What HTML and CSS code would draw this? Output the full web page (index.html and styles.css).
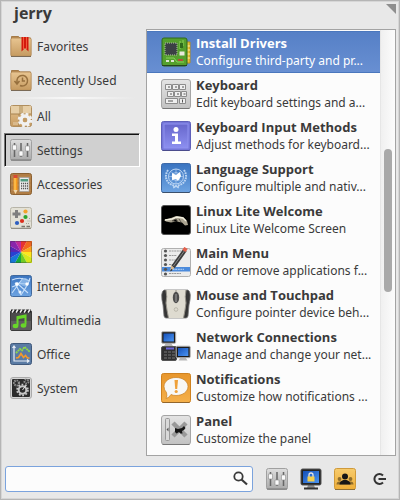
FILE: index.html
```html
<!DOCTYPE html>
<html lang="en">
<head>
<meta charset="utf-8">
<meta name="viewport" content="width=device-width, initial-scale=1">
<title>Applications</title>
<link rel="stylesheet" href="styles.css">
</head>
<body>
<svg class="defs" aria-hidden="true">
  <defs>
    <linearGradient id="tan" x2="0" y2="1"><stop stop-color="#e8c591"/><stop offset="1" stop-color="#c59a60"/></linearGradient>
    <linearGradient id="silver" x2="0" y2="1"><stop stop-color="#dedede"/><stop offset="1" stop-color="#a9a9a9"/></linearGradient>
    <linearGradient id="pale" x2="0" y2="1"><stop stop-color="#e4e4e4"/><stop offset="1" stop-color="#c2c2c2"/></linearGradient>
    <linearGradient id="blue" x2="0" y2="1"><stop stop-color="#3a74c0"/><stop offset="1" stop-color="#6ea4e2"/></linearGradient>
    <linearGradient id="violet" x2="0" y2="1"><stop stop-color="#6767cc"/><stop offset="1" stop-color="#8c8ff0"/></linearGradient>
    <linearGradient id="orange" x2="0" y2="1"><stop stop-color="#e7962c"/><stop offset="1" stop-color="#f5b04a"/></linearGradient>
    <linearGradient id="amber" x2="0" y2="1"><stop stop-color="#f7cb6c"/><stop offset="1" stop-color="#eeae38"/></linearGradient>
    <linearGradient id="screen" x2="1" y2="1"><stop stop-color="#1550b8"/><stop offset="1" stop-color="#4b95f2"/></linearGradient>
    <symbol id="sliders" viewBox="0 0 22 22">
      <rect x=".5" y=".5" width="21" height="21" rx="2" fill="url(#silver)" stroke="#a0a0a0"/>
      <path d="M1 21h20" stroke="#777"/>
      <path d="M4.500 4v14M11 4v14M17.500 4v14" stroke="#666" stroke-width="1.500"/>
      <path d="M2.500 6h4v5h-4zM9 12h4v5H9zM15.500 7h4v5h-4z" fill="#fafafa" stroke="#8d8d8d" stroke-width=".6"/>
    </symbol>
  </defs>
</svg>
<main class="menu">
  <header class="head">
    <h1 class="user">jerry</h1>
    <svg class="grip" viewBox="0 0 10 10" aria-hidden="true"><path d="M0 0h10v10z" fill="#8e8e8e"/></svg>
  </header>

  <div class="body">
    <nav class="cats" aria-label="Categories">
      <button class="cat">
        <svg class="ico" viewBox="0 0 22 22"><path d="M1.500 3V1.500h7L10 3h10.500v18h-19z" fill="#b98d55" stroke="#a57b48"/><rect x=".8" y="3" width="20.400" height="18.300" rx="1.500" fill="url(#tan)" stroke="#b08550" stroke-width=".8"/><path d="M1 21.500h20" stroke="#7a6a56"/><path d="M11.500 2h7v14.500L15 13l-3.500 3.500z" fill="#d3190c"/><path d="M13.500 2v12M16.500 2v12" stroke="#f15a3a"/></svg>
        <span>Favorites</span></button>
      <button class="cat">
        <svg class="ico" viewBox="0 0 22 22"><path d="M1.500 3V1.500h7L10 3h10.500v18h-19z" fill="#b98d55" stroke="#a57b48"/><rect x=".8" y="3" width="20.400" height="18.300" rx="1.500" fill="url(#tan)" stroke="#b08550" stroke-width=".8"/><path d="M1 21.500h20" stroke="#7a6a56"/><path d="M7 14.500V11a5.300 5.300 0 1 1 3 5.500M4.500 12l2.500 3 2.500-3M12.500 8.500V12H15" fill="none" stroke="#97703e" stroke-width="1.500"/></svg>
        <span>Recently Used</span></button>
      <hr class="rule">
      <button class="cat">
        <svg class="ico" viewBox="0 0 22 22"><rect x=".5" y=".5" width="21" height="21" rx="2" fill="url(#tan)" stroke="#b08e5e"/><path d="M1 1h20v8H1z" fill="#e6cea6"/><path d="M9 1h4v8H9z" fill="#c9ad7e"/><path d="M1 9h20M9 9v12" stroke="#a88350"/><path d="M3 17h5v3H3z" fill="#d9b98b"/><circle cx="15" cy="15" r="4" fill="none" stroke="#f1f1f1" stroke-width="3.400"/><circle cx="15" cy="15" r="6" fill="none" stroke="#f1f1f1" stroke-width="2.600" stroke-dasharray="2.700 2"/><circle cx="15" cy="15" r="2.200" fill="#c29b65"/></svg>
        <span>All</span></button>
      <button class="cat cat-on" aria-current="true">
        <svg class="ico"><use href="#sliders"/></svg>
        <span>Settings</span></button>
      <button class="cat">
        <svg class="ico" viewBox="0 0 22 22"><rect x=".5" y=".5" width="21" height="21" rx="2" fill="#b07d45" stroke="#8b6031"/><path d="M1 4h20M1 8h20M1 12h20M1 17h20" stroke="#c2925a" stroke-width=".7"/><path d="M3.500 5h4v12l-2 4-2-4z" fill="#f79a1e"/><path d="M5 5v12" stroke="#ffd36a"/><path d="M3.500 2h4v3h-4z" fill="#d84a30"/><path d="M3.500 17h4l-2 4z" fill="#eed7b0"/><rect x="9.500" y="4.500" width="9.500" height="14" fill="#ececec" stroke="#999" stroke-width=".6"/><path d="M10.500 6h7.500v2.500h-7.500z" fill="#4f9b80"/><path d="M11 10.500h7M11 13h7M11 15.500h7" stroke="#555" stroke-width="1.300" stroke-dasharray="1.200 .8"/></svg>
        <span>Accessories</span></button>
      <button class="cat">
        <svg class="ico" viewBox="0 0 22 22"><rect x=".5" y=".5" width="21" height="21" rx="2" fill="#e3e1d6" stroke="#b7b4a8"/><path d="M1 21.300h20" stroke="#8a877c"/><path d="M6.500 3v8M2.500 7h8" stroke="#7f7f7f" stroke-width="3"/><circle cx="15.500" cy="4.500" r="2.100" fill="#f3a32a"/><circle cx="15.500" cy="10" r="2.100" fill="#2da52d"/><circle cx="12" cy="14" r="2.100" fill="#dc2f1c"/><circle cx="7" cy="16" r="2.100" fill="#2e5fc0"/><path d="M11.500 19.500H15M16.500 19.500H20" stroke="#77756c" stroke-width="1.600"/><path d="M16 16.500h4M17.500 14h3M19 11.500h2" stroke="#a5a296" stroke-dasharray="1 1"/></svg>
        <span>Games</span></button>
      <button class="cat">
        <svg class="ico" viewBox="0 0 22 22"><path d="M11 11 5 0h6z" fill="#c22a9a"/><path d="M11 11V0h6z" fill="#e63231"/><path d="m11 11 6-11h5v5z" fill="#f2671f"/><path d="m11 11 11-6v6z" fill="#fba31c"/><path d="M11 11h11v6z" fill="#ffe51d"/><path d="m11 11 11 6v5h-5z" fill="#d5e81a"/><path d="m11 11 6 11h-6z" fill="#72cb26"/><path d="M11 11v11H5z" fill="#18a83d"/><path d="M11 11 5 22H0v-5z" fill="#1777d8"/><path d="M11 11 0 17v-6z" fill="#2840d2"/><path d="M11 11H0V5z" fill="#5527b5"/><path d="M11 11 0 5V0h5z" fill="#8a25ab"/><rect x=".5" y=".5" width="21" height="21" rx="1.500" fill="none" stroke="#333" stroke-opacity=".35"/></svg>
        <span>Graphics</span></button>
      <button class="cat">
        <svg class="ico" viewBox="0 0 22 22"><rect x=".5" y=".5" width="21" height="21" rx="2" fill="url(#blue)" stroke="#41699d"/><path d="M2 5q8-4 18 1M2 18 13 3M5 8l13 1-7 11M5 8l6 12M8 9l10 9M18 9l2-6M2 12l5-2" fill="none" stroke="#c9e0fa" stroke-width="1.100"/><path d="m12 4 4-1 3 3-3 2 1 4-4-1-4-2z" fill="#9cc4f0" opacity=".7"/><circle cx="7" cy="9" r="1.700" fill="#fff"/><circle cx="17" cy="9" r="1.700" fill="#fff"/><circle cx="10" cy="17" r="1.500" fill="#e8f3ff"/></svg>
        <span>Internet</span></button>
      <button class="cat">
        <svg class="ico" viewBox="0 0 22 22"><rect x=".5" y="1.500" width="21" height="20" rx="1.500" fill="#4c4c4c" stroke="#3a3a3a"/><path d="M1 12h20v9H1z" fill="#5e5e5e"/><path d="M1 2h20" stroke="#1c1c1c" stroke-width="3"/><path d="m2 3.500 2-3M6 3.500l2-3M10 3.500l2-3M14 3.500l2-3M18 3.500l2-3" stroke="#f2f2f2" stroke-width="1.500"/><path d="M7.500 16.500V8l8-1.500v9" fill="none" stroke="#68d629" stroke-width="2"/><path d="M7 9 16 7.500" stroke="#68d629" stroke-width="2.500"/><ellipse cx="5.500" cy="17" rx="2.800" ry="2.200" fill="#68d629"/><ellipse cx="13.500" cy="16.500" rx="2.800" ry="2.200" fill="#68d629"/></svg>
        <span>Multimedia</span></button>
      <button class="cat">
        <svg class="ico" viewBox="0 0 22 22"><rect x=".5" y=".5" width="21" height="21" rx="2" fill="#5a7ba4" stroke="#40597b"/><path d="M4 3v15h14M2.500 5 4 3l1.500 2M17 16.500l2 1.500-2 1.500" fill="none" stroke="#e7edf5" stroke-width="1.200"/><path d="m6 10 4-4 2 1.500L14.500 4 20 9" fill="none" stroke="#8ed64b" stroke-width="1.800" stroke-dasharray="2 .5"/><path d="m6 15 2.500-.5 2.500-4 2.500 4 2-2 2 2.500h2" fill="none" stroke="#f59a2a" stroke-width="1.600"/></svg>
        <span>Office</span></button>
      <button class="cat">
        <svg class="ico" viewBox="0 0 22 22"><rect x=".5" y=".5" width="21" height="21" rx="2.500" fill="#d5d5d5" stroke="#aaa"/><rect x="2" y="2" width="18" height="18" rx="1" fill="#2c2c2c"/><circle cx="12.500" cy="13" r="3.800" fill="none" stroke="#c6c6c6" stroke-width="2"/><circle cx="12.500" cy="13" r="5.400" fill="none" stroke="#c6c6c6" stroke-width="1.800" stroke-dasharray="1.800 1.600"/><path d="m12.500 13 3-4" stroke="#ddd"/><circle cx="6.500" cy="6" r="2.500" fill="none" stroke="#8d8d8d" stroke-width="2.200" stroke-dasharray="1.500 .8"/><circle cx="16.500" cy="4.500" r="2" fill="none" stroke="#8d8d8d" stroke-width="2" stroke-dasharray="1.500 .8"/></svg>
        <span>System</span></button>
    </nav>

    <section class="panel" aria-label="Settings">
      <div class="apps">
        <button class="app app-on">
          <svg class="pic" viewBox="0 0 30 30"><path d="M24 5h5v21h-5z" fill="#e7c438" stroke="#b78f1b"/><path d="M24 9h5M24 13h5M24 17h5M24 21h5" stroke="#fff0a0"/><rect x="1" y="1" width="25" height="28" rx="2" fill="#55a02d" stroke="#2f691a"/><path d="M1 28.500h25" stroke="#28451c"/><rect x="4" y="6" width="12" height="12" fill="#3c4145" stroke="#91a382" stroke-width="1.400" stroke-dasharray="1 1"/><path d="M19 4v8M22 3v6M5 21h8l3 4h7" fill="none" stroke="#8bd25b"/><rect x="18.500" y="14.500" width="5" height="4" fill="#e9e9dd"/><rect x="19" y="6" width="3" height="5" fill="#2f6a1c"/><path d="M5 24h3M10 24h3" stroke="#dfe5d4" stroke-width="2"/><path d="M17 23h5" stroke="#b44e38" stroke-width="2"/></svg>
          <span class="txt"><b class="name">Install Drivers</b><span class="desc">Configure third-party and pr...</span></span></button>
        <button class="app">
          <svg class="pic" viewBox="0 0 30 30"><rect x=".5" y=".5" width="29" height="29" rx="2.500" fill="url(#pale)" stroke="#a5a5a5"/><path d="M1.500 29.500h27" stroke="#777"/><g fill="#efefef" stroke="#8b8b8b"><path d="M4.500 5.500h6v5h-6zM11.500 5.500h6v5h-6zM18.500 5.500h6v5h-6zM6.500 12.500h6v5h-6zM13.500 12.500h6v5h-6zM20.500 12.500h5v5h-5zM4.500 19.500h12v5h-12zM18.500 19.500h6v5h-6z"/></g><path d="M7 8h2M14 8h2M21 8h2M9 15h2M16 15h2M22.500 15h2M7 22h5M21.500 20.500v3" stroke="#555"/></svg>
          <span class="txt"><b class="name">Keyboard</b><span class="desc">Edit keyboard settings and a...</span></span></button>
        <button class="app">
          <svg class="pic" viewBox="0 0 30 30"><rect x=".5" y=".5" width="29" height="29" rx="2" fill="#7476d8" stroke="#5f60ba"/><rect x="3" y="3" width="24" height="24" fill="url(#violet)" stroke="#8f92ef"/><path d="M1.500 29.500h27" stroke="#4b4c8c"/><circle cx="15" cy="8.500" r="2.500" fill="#fff"/><path d="M11 12.500h6v8h3V23h-9v-2.500h3V15h-3z" fill="#fff"/></svg>
          <span class="txt"><b class="name">Keyboard Input Methods</b><span class="desc">Adjust methods for keyboard...</span></span></button>
        <button class="app">
          <svg class="pic" viewBox="0 0 30 30"><rect x=".5" y=".5" width="29" height="29" rx="2" fill="url(#blue)" stroke="#3e6aa8"/><path d="M1.500 29.500h27" stroke="#3b506c"/><g fill="none" stroke="#bcd5f3"><circle cx="15" cy="13.500" r="7.500"/><circle cx="15" cy="13.500" r="4" stroke-width=".7"/><path d="M7.500 13.500h15M15 6v15M10 8.500l10 10M20 8.500l-10 10" stroke-width=".6"/><path d="M7 7q-5 8 2 14l9 3.500M23 7q5 8-2 14l-9 3.500" stroke-width="2" stroke-dasharray="1.800 .8"/></g><path d="m11 10 4 2 4-3 1 4-3 5-2-2-4 1z" fill="#fff"/></svg>
          <span class="txt"><b class="name">Language Support</b><span class="desc">Configure multiple and nativ...</span></span></button>
        <button class="app">
          <svg class="pic" viewBox="0 0 30 30"><rect x=".5" y=".5" width="29" height="29" rx="2.500" fill="#000" stroke="#555"/><path d="m3 15 7-2 5-2 7 1 4 4 1 4-3 .5-3-3-6-1-5 1-5-1z" fill="#aaa391"/><path d="m4 15 7-1 5-2 6 1 3 3" fill="none" stroke="#f3efdf" stroke-width="1.400"/><path d="m11 16 4-2 2 3M18 14l2 3" stroke="#5b554b"/></svg>
          <span class="txt"><b class="name">Linux Lite Welcome</b><span class="desc">Linux Lite Welcome Screen</span></span></button>
        <button class="app">
          <svg class="pic" viewBox="0 0 30 30"><rect x=".5" y="1.500" width="29" height="28" rx="2" fill="#ececec" stroke="#b0b0b0"/><path d="M1 20h28v4.500H1z" fill="#4c8bdc"/><path d="M8 4h14M8 8.500h8M8 13h7M8 17.500h6M8 26.500h12" stroke="#999" stroke-dasharray="2 .6"/><path d="M9 22.300h14" stroke="#b9d5f6" stroke-dasharray="2 .6"/><g fill="#555"><circle cx="4.500" cy="4" r="1.600"/><circle cx="4.500" cy="8.500" r="1.600"/><circle cx="4.500" cy="13" r="1.600"/><circle cx="4.500" cy="17.500" r="1.600"/><circle cx="4.500" cy="22.300" r="1.600"/><circle cx="4.500" cy="27" r="1.600"/></g><path d="M12 20 24 3" stroke="#3d3d3d" stroke-width="4"/><path d="M12.500 19 24 3" stroke="#888"/><path d="m23 4 2-3" stroke="#e2604d" stroke-width="4"/><path d="m10 18.500 3.500 2.500-4 3z" fill="#d8b78b"/><path d="m10 22-.8 2.500L11.500 23z" fill="#111"/></svg>
          <span class="txt"><b class="name">Main Menu</b><span class="desc">Add or remove applications f...</span></span></button>
        <button class="app">
          <svg class="pic" viewBox="0 0 30 30"><path d="M3 1h24q2 1 2.300 5 .2 4-1.300 10l-1 11q-.5 2-2 2H5q-1.500 0-2-2L2 16Q.5 10 .7 6 1 2 3 1z" fill="#353535" stroke="#777" stroke-width=".8"/><path d="M5 1h20q-1.500 7 0 13-1 8-2.500 15h-15Q6 22 5 14q1.500-6 0-13z" fill="#dedbd0"/><path d="M5 1q1.500 7 0 13 1 8 2.500 15M25 1q-1.500 7 0 13-1 8-2.500 15M15 1v3" fill="none" stroke="#96938a"/><ellipse cx="15" cy="8.500" rx="3.200" ry="5.800" fill="#4d4d4d"/><path d="M15 5v8" stroke="#a1a1a1"/><circle cx="15" cy="20.500" r="1.800" fill="none" stroke="#bab7ab"/></svg>
          <span class="txt"><b class="name">Mouse and Touchpad</b><span class="desc">Configure pointer device beh...</span></span></button>
        <button class="app">
          <svg class="pic" viewBox="0 0 30 30"><rect x=".5" y="15.500" width="15" height="14" rx="1.500" fill="#303030" stroke="#555"/><path d="M5 17.500h8" stroke="#6c66dc" stroke-width="2"/><path d="M3 21h3M7 21h3M11 21h3M3 24h3M7 24h3M11 24h3M3 27h3M7 27h3M11 27h3" stroke="#777"/><g id="pc"><path d="M5 12h5l2 3H3z" fill="#b6b6b6"/><rect x=".7" y=".7" width="14" height="11.500" rx="1" fill="#1c1c1c" stroke="#b5b5b5"/><rect x="2.500" y="2.500" width="10.400" height="8" fill="url(#screen)"/></g><use href="#pc" x="14.500" y="14.500"/></svg>
          <span class="txt"><b class="name">Network Connections</b><span class="desc">Manage and change your net...</span></span></button>
        <button class="app">
          <svg class="pic" viewBox="0 0 30 30"><rect x=".5" y=".5" width="29" height="29" rx="2" fill="url(#orange)" stroke="#cf8220"/><path d="M1.500 29.500h27" stroke="#92662c"/><path d="M15 4.500c7 0 12 4 12 9s-5 9-12 9q-3 0-5-1-2 3.500-5 4 1.500-3 .5-6Q3 17 3 13.500c0-5 5-9 12-9z" fill="#f8f8f6" stroke="#c77f24" stroke-width=".7"/><path d="M13.500 7h3.500l-.8 9h-2z" fill="#efa13a"/><circle cx="15.200" cy="18.500" r="1.600" fill="#efa13a"/></svg>
          <span class="txt"><b class="name">Notifications</b><span class="desc">Customize how notifications ...</span></span></button>
        <button class="app">
          <svg class="pic" viewBox="0 0 30 30"><rect x=".5" y=".5" width="29" height="29" rx="2.500" fill="url(#pale)" stroke="#a5a5a5"/><path d="M1.500 29.500h27" stroke="#777"/><rect x="4.500" y="3.500" width="4" height="22" rx="1" fill="#d9d9d9" stroke="#999"/><path d="m7.500 12.500-2 2 2 2z" fill="#555"/><path d="m12 8 13 13M25 8 12 21" stroke="#999" stroke-width="4.500"/><path d="m14 13 3 1 4-1 2-2 1.500 2-1.500 2-2 1 .5 2.500h-2L18 17l-2.500 1.500L14 17z" fill="#161616"/></svg>
          <span class="txt"><b class="name">Panel</b><span class="desc">Customize the panel</span></span></button>
      </div>
      <div class="track"><div class="thumb"></div></div>
    </section>
  </div>

  <footer class="foot">
    <label class="search">
      <input class="query" type="text" aria-label="Search">
      <svg class="lens" viewBox="0 0 15 15" aria-hidden="true"><circle cx="5.500" cy="5.500" r="4.200" fill="none" stroke="#3a3a3a" stroke-width="1.800"/><path d="m8.500 8.500 5.500 5" stroke="#3a3a3a" stroke-width="2.200"/></svg>
    </label>
    <div class="actions">
      <button class="act" aria-label="All settings"><svg class="ico"><use href="#sliders"/></svg></button>
      <button class="act" aria-label="Lock screen"><svg class="ico" viewBox="0 0 22 22"><path d="M8 17h6l1 3H7z" fill="#8d8d8d"/><path d="M4 20.500h14" stroke="#333" stroke-width="2"/><rect x="1" y="1" width="20" height="16" rx="1.500" fill="#252525" stroke="#555"/><rect x="3" y="3" width="16" height="12" fill="url(#screen)"/><path d="M9 9V7q0-2 2-2t2 2v2" fill="none" stroke="#e5e5e5" stroke-width="1.300"/><rect x="7.500" y="8.500" width="7" height="5" fill="#f4cf4c"/></svg></button>
      <button class="act" aria-label="Switch users"><svg class="ico" viewBox="0 0 22 22"><rect x=".5" y=".5" width="21" height="21" rx="2" fill="url(#amber)" stroke="#cf9a3b"/><path d="M1 21.500h20" stroke="#8f7038"/><g fill="#8f6d2c"><circle cx="5.500" cy="11" r="1.900"/><circle cx="16.500" cy="11" r="1.900"/><path d="M2.500 16.500q0-3 3-3h11q3 0 3 3z"/></g><circle cx="11" cy="8.500" r="3" fill="#161616"/><path d="M5.500 16.500q0-3.500 4-4.500h3q4 1 4 4.500z" fill="#161616"/></svg></button>
      <button class="act" aria-label="Quit"><svg class="ico" viewBox="0 0 22 22"><path d="M15 7.500a5 5 0 1 0 0 7M10.500 11H18" fill="none" stroke="#333" stroke-width="2"/></svg></button>
    </div>
  </footer>
</main>
</body>
</html>
```
FILE: styles.css
```css
* { box-sizing: border-box; }

body {
  margin: 0;
  background: #e8e8e8;
  color: #3a3a3a;
  font: 12px/17px "Noto Sans", "Open Sans", sans-serif;
}

button {
  margin: 0;
  padding: 0;
  border: 0;
  background: none;
  color: inherit;
  font: inherit;
  text-align: left;
}

svg { display: block; flex: none; }

.defs { position: absolute; width: 0; height: 0; }

.menu {
  display: flex;
  flex-direction: column;
  min-height: 100vh;
  border: 1px solid #b5b5b5;
  box-shadow: inset 0 0 0 1px #d6d6d6;
}

.head {
  display: flex;
  justify-content: space-between;
  height: 28px;
  padding: 3px 3px 0 13px;
}

.user {
  margin: 0;
  font-family: "Open Sans", "Noto Sans", sans-serif;
  font-size: 16px;
  line-height: 18px;
}

.grip { width: 10px; height: 10px; }

.body {
  display: flex;
  flex: 1;
  gap: 6px;
  padding: 0 3px;
}

.cats {
  display: flex;
  flex-direction: column;
  flex: none;
  width: 136px;
}

.cat {
  display: flex;
  align-items: center;
  gap: 5px;
  height: 34px;
  padding: 0 6px;
}

.cat-on {
  padding: 0 5px;
  border: 1px solid;
  border-color: #777 #fff #fff #777;
  background: #d0d0d0;
  box-shadow: inset 1px 1px #111;
}

.ico { width: 22px; height: 22px; }

.rule {
  width: 128px;
  height: 2px;
  margin: 0 4px;
  border: 0;
  background: linear-gradient(90deg, transparent, #f8f8f8 50%, transparent);
}

.panel {
  display: flex;
  flex: 1;
  min-width: 0;
  border: 1px solid #a3a3a3;
  background: #fcfcfc;
}

.apps {
  flex: 1;
  min-width: 0;
  padding: 1px 0 4px;
}

.app {
  display: flex;
  align-items: center;
  gap: 5px;
  width: 100%;
  height: 42px;
  padding: 0 0 0 14px;
}

.app-on {
  border-top: 1px solid #4a77bd;
  border-bottom: 1px solid #4a77bd;
  background: linear-gradient(#5680c6, #688fd2);
  color: #fff;
}

.pic { width: 30px; height: 30px; }

.txt { min-width: 0; overflow: hidden; white-space: nowrap; }

.name, .desc { display: block; }

.name { font-family: "Open Sans", "Noto Sans", sans-serif; font-size: 13px; }

.track {
  flex: none;
  width: 15px;
  padding: 119px 3px 0;
  border-left: 1px solid #e6e6e6;
  background: linear-gradient(90deg, #f0f0f0, #fcfcfc);
}

.thumb {
  width: 8px;
  height: 143px;
  border-radius: 4px;
  background: #a9a9a9;
}

.foot {
  display: flex;
  align-items: center;
  height: 43px;
  padding: 2px 9px 0 4px;
  gap: 13px;
}

.search {
  display: flex;
  align-items: center;
  flex: 1;
  height: 26px;
  padding: 0 4px;
  border: 1px solid #7ba3dd;
  border-radius: 3px;
  background: #fcfcfc;
}

.query {
  flex: 1;
  min-width: 0;
  border: 0;
  outline: 0;
  background: none;
  font: inherit;
}

.lens { width: 15px; height: 15px; }

.actions { display: flex; gap: 12px; }
```
